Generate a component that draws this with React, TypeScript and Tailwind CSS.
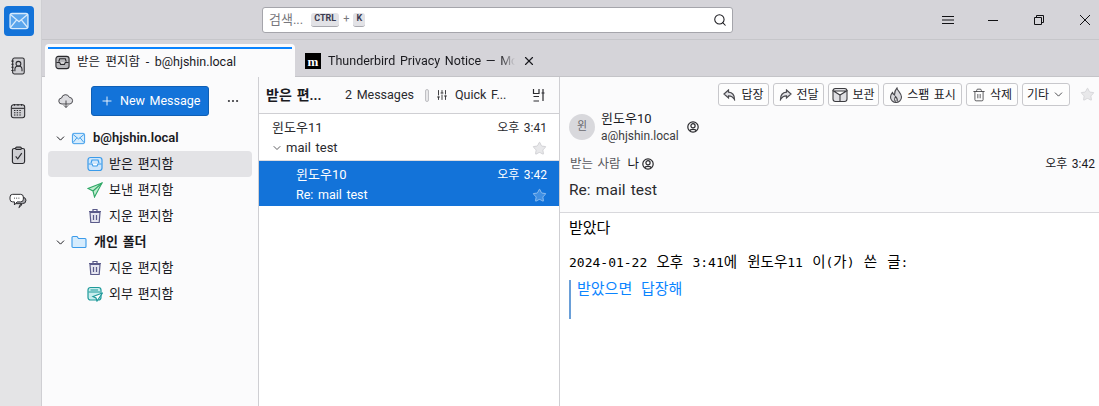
import { ChevronDown, Plus, Search, X, Ellipsis, Star, SlidersHorizontal, Trash2 } from "lucide-react";
import type { ReactNode } from "react";

const FONT = "font-['Roboto','Noto_Sans_CJK_KR',sans-serif]";

// --- icons drawn by hand ---
function MailIcon({ className, fill = "none" }: { className?: string; fill?: string }) {
  return (
    <svg viewBox="0 0 16 16" className={className} fill={fill} stroke="currentColor" strokeWidth="1">
      <rect x="1.5" y="2.5" width="13" height="11" rx="1.5" />
      <path d="M2 3.5 8 8.5 14 3.5M2 12.5 6.3 7.2M14 12.5 9.7 7.2" fill="none" />
    </svg>
  );
}

function InboxIcon({ className, fill = "none" }: { className?: string; fill?: string }) {
  return (
    <svg viewBox="0 0 16 16" className={className} fill={fill} stroke="currentColor" strokeWidth="1.2">
      <rect x="1" y="1.5" width="14" height="13" rx="2.5" />
      <path d="M1.5 8H5L6 10H10L11 8H14.5" fill="#fff" />
      <path d="M4 7 5 4H11L12 7" />
    </svg>
  );
}

function TrashIcon() {
  return (
    <svg viewBox="0 0 16 16" className="h-4 w-4 text-[#5b5b8a]" fill="#e6e6f0" stroke="currentColor" strokeWidth="1.2">
      <path d="M3 4.5 3.8 14.5H12.2L13 4.5Z" />
      <path d="M2 3.5H14M6 3V1.5H10V3M6.5 7V12M9.5 7V12" fill="none" />
    </svg>
  );
}

function SendIcon() {
  return (
    <svg viewBox="0 0 16 16" className="h-4 w-4 text-[#2fa866]" fill="#bfeccf" stroke="currentColor" strokeWidth="1.1">
      <path d="M15 1 1 6.5 6 9 7.5 15Z" />
      <path d="M15 1 6 9" fill="none" />
    </svg>
  );
}

function OutboxIcon() {
  return (
    <svg viewBox="0 0 16 16" className="h-4 w-4 text-[#1f9a9a]" fill="none" stroke="currentColor" strokeWidth="1.2">
      <rect x="1" y="1.5" width="13" height="12.5" rx="2.5" fill="#c8eeee" />
      <path d="M1.5 6H13M3.5 4H11" />
      <path d="M15.5 7 6 10.5 9 12 10 15Z" fill="#fff" />
    </svg>
  );
}

function FolderIcon() {
  return (
    <svg viewBox="0 0 16 16" className="h-4 w-4 text-[#3b9bea]" fill="#d6ecfd" stroke="currentColor" strokeWidth="1.1">
      <path d="M1 3.5A1 1 0 0 1 2 2.5H6L7.5 4.5H14A1 1 0 0 1 15 5.5V12.5A1 1 0 0 1 14 13.5H2A1 1 0 0 1 1 12.5Z" />
    </svg>
  );
}

function AddressBookIcon() {
  return (
    <svg viewBox="0 0 18 20" className="h-[18px] w-4 text-[#2a2a2e]" fill="#cfcfd3" stroke="currentColor" strokeWidth="1.2">
      <rect x="3" y="1" width="13" height="18" rx="2" />
      <circle cx="9.5" cy="7.5" r="2.7" fill="none" />
      <path d="M5.5 16V14A4 4 0 0 1 13.5 14V16" fill="none" />
      <path d="M1.5 4.5H4M1.5 8H4M1.5 11.5H4M1.5 15H4" />
    </svg>
  );
}

function CalendarIcon() {
  return (
    <svg viewBox="0 0 18 18" className="h-4 w-4 text-[#2a2a2e]" fill="#cfcfd3" stroke="currentColor" strokeWidth="1.2">
      <rect x="1.5" y="2" width="15" height="14.5" rx="2.5" />
      <path d="M2 6H16" />
      <path d="M4.5 8.5H13.5M4.5 11H13.5M4.5 13.5H13.5" strokeDasharray="1.6 1.4" />
      <path d="M5 1V3M9 1V3M13 1V3" />
    </svg>
  );
}

function TaskIcon() {
  return (
    <svg viewBox="0 0 16 20" className="h-[19px] w-[15px] text-[#2a2a2e]" fill="#cfcfd3" stroke="currentColor" strokeWidth="1.2">
      <rect x="1.5" y="2.5" width="13" height="16" rx="2" />
      <rect x="5" y="1" width="6" height="2.5" rx="1" />
      <path d="M5 11 7.2 13.5 11.5 7.5" fill="none" />
    </svg>
  );
}

function ChatIcon() {
  return (
    <svg viewBox="0 0 20 18" className="h-4 w-[18px] text-[#2a2a2e]" fill="#dcdce0" stroke="currentColor" strokeWidth="1.1">
      <path d="M8 12H15A4 4 0 0 0 19 8V8A3.5 3.5 0 0 0 15 5H8Z" fill="#a8a8ae" />
      <path d="M11 16.5 12.5 13H14.5Z" fill="#a8a8ae" />
      <path d="M4 1.5H13A3 3 0 0 1 16 4.5V7A3 3 0 0 1 13 10H9L6 13.5V10H4A3 3 0 0 1 1 7V4.5A3 3 0 0 1 4 1.5Z" fill="#fff" />
      <path d="M5.5 5.8H6.5M8 5.8H9M10.5 5.8H11.5" />
    </svg>
  );
}

function CloudIcon() {
  return (
    <svg viewBox="0 0 16 16" className="h-4 w-4 text-[#4a4a4f]" fill="#dcdce0" stroke="currentColor" strokeWidth="1">
      <path d="M4 11A3 3 0 0 1 3.6 5 4 4 0 0 1 11.3 4.3 3.4 3.4 0 0 1 12 11Z" />
      <path d="M8 7.5V14.5M5.8 12.3 8 14.5 10.2 12.3" fill="none" />
    </svg>
  );
}

function ContactIcon({ className }: { className?: string }) {
  return (
    <svg viewBox="0 0 12 12" className={className} fill="none" stroke="currentColor" strokeWidth="1.2">
      <circle cx="6" cy="6" r="5.2" />
      <circle cx="6" cy="4.8" r="2.1" />
      <path d="M2.8 9.8C3.2 7.8 8.8 7.8 9.2 9.8" />
    </svg>
  );
}

function ReplyIcon() {
  return (
    <svg viewBox="0 0 14 12" className="h-3 w-[14px] text-[#4a4a4f]" fill="#e0e0e4" stroke="currentColor" strokeWidth="1.2">
      <path d="M5.5 1 1 5 5.5 9V6.8C8 6.8 10 7.8 11.5 10.5 11.5 6.5 9.5 3.5 5.5 3.2Z" />
    </svg>
  );
}

function ForwardIcon() {
  return (
    <svg viewBox="0 0 14 12" className="h-3 w-[14px] text-[#4a4a4f]" fill="#e0e0e4" stroke="currentColor" strokeWidth="1.2">
      <path d="M8.5 1 13 5 8.5 9V6.8C6 6.8 4 7.8 2.5 10.5 2.5 6.5 4.5 3.5 8.5 3.2Z" />
    </svg>
  );
}

function ArchiveIcon() {
  return (
    <svg viewBox="0 0 16 16" className="h-4 w-4 text-[#3c3c40]" fill="#e0e0e4" stroke="currentColor" strokeWidth="1.1">
      <rect x="1" y="1.5" width="14" height="13" rx="2.5" />
      <path d="M1.5 4H14.5L8 8ZM8 8V14" fill="#fff" />
    </svg>
  );
}

function FlameIcon() {
  return (
    <svg viewBox="0 0 14 16" className="h-4 w-[14px] text-[#4a4a4f]" fill="#d8d8dc" stroke="currentColor" strokeWidth="1.1">
      <path d="M8 1C8.5 4 12.5 6 12.5 10A5.5 5.5 0 0 1 1.5 10C1.5 8 2.5 6.5 3.5 5.5 4 7 4.5 7.5 5.5 8 5.5 5 6 3 8 1Z" />
      <path d="M7 14.5C5.5 14 5 12.5 6.5 9.5 8 11 9 12.5 8 14.5" fill="#fff" />
    </svg>
  );
}

function WindowIcon({ d, className }: { d: string; className?: string }) {
  return (
    <svg viewBox="0 0 12 12" className={`h-3 w-3 text-[#111114] ${className ?? ""}`} fill="none" stroke="currentColor" strokeWidth="1">
      <path d={d} />
    </svg>
  );
}

// --- small pieces ---
function RailItem({ children }: { children: ReactNode }) {
  return <div className="flex h-[45px] w-full items-center justify-center pr-[5px]">{children}</div>;
}

function FolderRow({ icon, label, selected }: { icon: ReactNode; label: string; selected?: boolean }) {
  return (
    <div className={`mx-1.5 flex h-[26px] items-center gap-[6px] rounded pl-[39px] text-[13px] text-[#1a1a1f] ${selected ? "bg-[#e3e3e6]" : ""}`}>
      {icon}
      <span>{label}</span>
    </div>
  );
}

function AccountRow({ icon, label }: { icon: ReactNode; label: string }) {
  return (
    <div className="flex h-[26px] items-center pl-[12px] text-[13px] font-semibold text-[#1a1a1f]">
      <ChevronDown className="mr-[4px] h-[13px] w-[13px] text-[#1a1a1f]" strokeWidth={1.8} />
      {icon}
      <span className="ml-[7px]">{label}</span>
    </div>
  );
}

function ToolButton({ icon, label, right, width }: { icon?: ReactNode; label: string; right?: ReactNode; width: string }) {
  return (
    <div className={`flex h-[23px] items-center justify-center gap-1 rounded-[3px] border border-[#c8c8cc] bg-[#fdfdfd] text-[12px] text-[#1a1a1f] ${width}`}>
      {icon}
      <span>{label}</span>
      {right}
    </div>
  );
}

export default function App() {
  return (
    <div className={`flex h-[406px] w-[1099px] overflow-hidden bg-white [word-spacing:1.5px] ${FONT}`}>
      {/* spaces toolbar */}
      <div className="flex w-[42px] shrink-0 flex-col border-r border-[#cfcfd3] bg-[#e4e4e6] pt-[6px]">
        <div className="mb-[7px] ml-[4px] flex h-[30px] w-[30px] items-center justify-center rounded bg-[#1373d9]">
          <MailIcon className="h-[22px] w-[22px] text-[#d8ebfc]" fill="#5aa5ec" />
        </div>
        <div className="flex w-full flex-col">
          <RailItem><AddressBookIcon /></RailItem>
          <RailItem><CalendarIcon /></RailItem>
          <RailItem><TaskIcon /></RailItem>
          <RailItem><ChatIcon /></RailItem>
        </div>
      </div>

      <div className="flex min-w-0 flex-1 flex-col">
        {/* title bar */}
        <div className="flex h-[40px] shrink-0 items-center border-b border-[#c6c6ca] bg-[#d5d4d9]">
          <div className="ml-[220px] flex h-[26px] w-[471px] items-center rounded-[3px] border border-[#a5a5ab] bg-white pl-[6px] pr-[5px] text-[13px] text-[#77777d]">
            <span className="mr-[8px]">검색...</span>
            <span className="flex h-[14px] items-center rounded-[3px] border-b border-[#a8a8ae] bg-[#e2e2e6] px-[3px] text-[9px] font-bold text-[#3a3a50]">CTRL</span>
            <span className="mx-[4px] text-[11px]">+</span>
            <span className="flex h-[14px] items-center rounded-[3px] border-b border-[#a8a8ae] bg-[#e2e2e6] px-[3px] text-[9px] font-bold text-[#3a3a50]">K</span>
            <Search className="ml-auto h-[14px] w-[14px] text-[#1a1a1f]" strokeWidth={1.8} />
          </div>
          <WindowIcon className="ml-[209px]" d="M0 2.5H12M0 6H12M0 9.5H12" />
          <WindowIcon className="ml-[33px]" d="M1 6.5H11" />
          <WindowIcon className="ml-[34px]" d="M1.5 3.5H8.5V10.5H1.5ZM3.5 3.5V1.5H10.5V8.5H8.5" />
          <WindowIcon className="ml-[34px]" d="M1 1 11 11M11 1 1 11" />
        </div>

        {/* tabs */}
        <div className="flex h-[37px] shrink-0 border-b border-[#c4c4c8] bg-[#d5d4d9]">
          <div className="relative -mb-px ml-[3px] mt-[4px] flex w-[250px] items-center gap-[7px] rounded-t bg-[#fbfbfc] pl-[10px] pt-[3px] text-[12.5px] text-[#1a1a1f] [word-spacing:2.5px]">
            <div className="absolute inset-x-[3px] top-[3px] h-[2px] bg-[#0a84ff]" />
            <InboxIcon className="h-[15px] w-[15px] text-[#2a2a2e]" fill="#b8b8bc" />
            <span className="whitespace-nowrap">받은 편지함 - b@hjshin.local</span>
          </div>
          <div className="flex items-center pl-[10px] pt-[6px] text-[12.5px] text-[#1a1a1f]">
            <div className="flex h-4 w-4 items-center justify-center bg-black font-['Liberation_Serif',serif] text-[13px] font-bold leading-none text-white">m</div>
            <span className="ml-[7px] w-[187px] whitespace-nowrap [mask-image:linear-gradient(to_right,black_92%,transparent)]">Thunderbird Privacy Notice — Mo</span>
            <X className="ml-[7px] h-[14px] w-[14px]" strokeWidth={2} />
          </div>
        </div>

        <div className="flex min-h-0 flex-1">
          {/* folder pane */}
          <div className="flex w-[217px] shrink-0 flex-col border-r border-[#cfcfd3] bg-[#fbfbfc]">
            <div className="flex h-[48px] items-center">
              <div className="ml-[16px]"><CloudIcon /></div>
              <div className="ml-[17px] flex h-[30px] w-[118px] shrink-0 items-center rounded-[3px] border border-[#0f5fb5] bg-[#1373d9] pl-[8px] text-[12.5px] text-white">
                <Plus className="h-[14px] w-[14px]" strokeWidth={1.5} />
                <span className="ml-[6px] whitespace-nowrap">New Message</span>
              </div>
              <Ellipsis className="ml-[17px] h-[14px] w-[14px] text-[#3c3c40]" strokeWidth={1.8} />
            </div>
            <div className="flex flex-col">
              <AccountRow icon={<MailIcon className="h-[15px] w-[15px] text-[#3b9bea]" fill="#d6ecfd" />} label="b@hjshin.local" />
              <FolderRow selected icon={<InboxIcon className="h-4 w-4 text-[#3b9bea]" fill="#cfe6fb" />} label="받은 편지함" />
              <FolderRow icon={<SendIcon />} label="보낸 편지함" />
              <FolderRow icon={<TrashIcon />} label="지운 편지함" />
              <AccountRow icon={<FolderIcon />} label="개인 폴더" />
              <FolderRow icon={<TrashIcon />} label="지운 편지함" />
              <FolderRow icon={<OutboxIcon />} label="외부 편지함" />
            </div>
          </div>

          {/* message list */}
          <div className="flex w-[301px] shrink-0 flex-col border-r border-[#cfcfd3] bg-white">
            <div className="flex h-[37px] shrink-0 items-center whitespace-nowrap border-b border-[#cfcfd3] bg-[#fbfbfc] pl-[7px] text-[12.5px] text-[#2a2a2e]">
              <span className="w-[79px] text-[14px] font-semibold text-[#1a1a1f]">받은 편...</span>
              <span className="w-[65px]">2 Messages</span>
              <span className="ml-[15px] h-[13px] w-1 rounded-sm border border-[#c0c0c4] bg-[#e8e8ea]" />
              <SlidersHorizontal className="ml-[7px] h-[12px] w-[12px] rotate-90" strokeWidth={1.8} />
              <span className="ml-[7px] w-[50px]">Quick F...</span>
              <svg viewBox="0 0 14 14" className="ml-[27px] h-[14px] w-[14px] text-[#2a2a2e]" fill="none" stroke="currentColor" strokeWidth="1.2">
                <path d="M1.5 1V5.5H7V1M1.5 13H7M1.5 8.5H7M11 1V13M9.5 5H12.5" />
              </svg>
            </div>
            <div className="flex h-[47px] shrink-0 flex-col border-b border-[#dcdce0] px-[13px] text-[13px] text-[#2a2a2e]">
              <div className="flex h-[25px] items-center justify-between pt-[2px]">
                <span>윈도우11</span>
                <span className="-mr-[1px] text-[12px]">오후 3:41</span>
              </div>
              <div className="flex h-[18px] items-center">
                <ChevronDown className="-ml-[1px] mr-[3px] h-[12px] w-[12px]" strokeWidth={1.5} />
                <span>mail test</span>
                <Star className="ml-auto -mr-[1px] h-[15px] w-[15px] fill-[#e8e8ea] text-[#c8c8cc]" strokeWidth={1.2} />
              </div>
            </div>
            <div className="flex h-[45px] shrink-0 flex-col bg-[#1373d9] pl-[37px] pr-[13px] text-[12.5px] text-white">
              <div className="flex h-[25px] items-center justify-between pt-[2px]">
                <span className="text-[13px]">윈도우10</span>
                <span className="-mr-[1px] text-[12px]">오후 3:42</span>
              </div>
              <div className="flex h-[18px] items-center">
                <span>Re: mail test</span>
                <Star className="ml-auto -mr-[1px] h-[15px] w-[15px] fill-[#3f8fe3] text-[#a9cdf3]" strokeWidth={1.2} />
              </div>
            </div>
          </div>

          {/* message pane */}
          <div className="flex min-w-0 flex-1 flex-col bg-white">
            <div className="flex h-[136px] shrink-0 flex-col border-b border-[#d8d8dc] bg-[#fbfbfc]">
              <div className="flex h-[29px] items-end justify-end gap-[4px] pr-[4px]">
                <ToolButton width="w-[51px]" icon={<ReplyIcon />} label="답장" />
                <ToolButton width="w-[51px]" icon={<ForwardIcon />} label="전달" />
                <ToolButton width="w-[51px]" icon={<ArchiveIcon />} label="보관" />
                <ToolButton width="w-[79px]" icon={<FlameIcon />} label="스팸 표시" />
                <ToolButton width="w-[52px]" icon={<Trash2 className="h-[14px] w-[14px] text-[#3c3c40]" strokeWidth={1.4} />} label="삭제" />
                <ToolButton width="w-[48px]" label="기타" right={<ChevronDown className="-ml-[1px] h-[13px] w-[13px]" strokeWidth={1.4} />} />
                <Star className="ml-[6px] mb-[4px] h-[15px] w-[15px] fill-[#e8e8ea] text-[#cfcfd3]" strokeWidth={1.2} />
              </div>
              <div className="flex h-[42px] items-center pl-[9px]">
                <div className="flex h-[26px] w-[26px] items-center justify-center rounded-full bg-[#d8d8dc] text-[11px] text-[#6a6a70]">윈</div>
                <div className="ml-[6px] flex flex-col">
                  <span className="text-[13px] leading-[18px] text-[#1a1a1f]">윈도우10</span>
                  <span className="text-[12px] leading-[17px] text-[#3c3c40]">a@hjshin.local</span>
                </div>
                <ContactIcon className="ml-[8px] h-3 w-3 text-[#2a2a2e]" />
              </div>
              <div className="flex h-[30px] items-center pl-[10px] pr-[4px] pt-[2px] text-[12.5px] text-[#5a5a60]">
                <span>받는 사람</span>
                <span className="ml-[7px] text-[#1a1a1f]">나</span>
                <ContactIcon className="ml-[3px] h-3 w-3 text-[#2a2a2e]" />
                <span className="ml-auto text-[12px] text-[#1a1a1f]">오후 3:42</span>
              </div>
              <div className="pl-[9px] pt-[2px] text-[15.5px] leading-[20px] text-[#2a2a2e]">Re: mail test</div>
            </div>
            <div className="flex flex-col pl-[9px] pt-[5px] [word-spacing:0]">
              <div className="text-[15px] leading-[20px] text-black">받았다</div>
              <div className="mt-[15px] font-['DejaVu_Sans_Mono','Noto_Sans_CJK_KR',monospace] text-[13px] leading-[18px] text-black [word-spacing:1.4px]">
                2024-01-22 <span className="text-[14.5px]">오후</span> 3:41<span className="text-[14.5px]">에 윈도우</span>11 <span className="text-[14.5px]">이</span>(<span className="text-[14.5px]">가</span>) <span className="text-[14.5px]">쓴 글</span>:
              </div>
              <div className="mt-[8px] h-[39px] border-l-2 border-[#6a9fd8] pl-[6px] text-[15px] leading-[18px] text-[#0a84ff] [word-spacing:5px]">
                받았으면 답장해
              </div>
            </div>
          </div>
        </div>
      </div>
    </div>
  );
}
